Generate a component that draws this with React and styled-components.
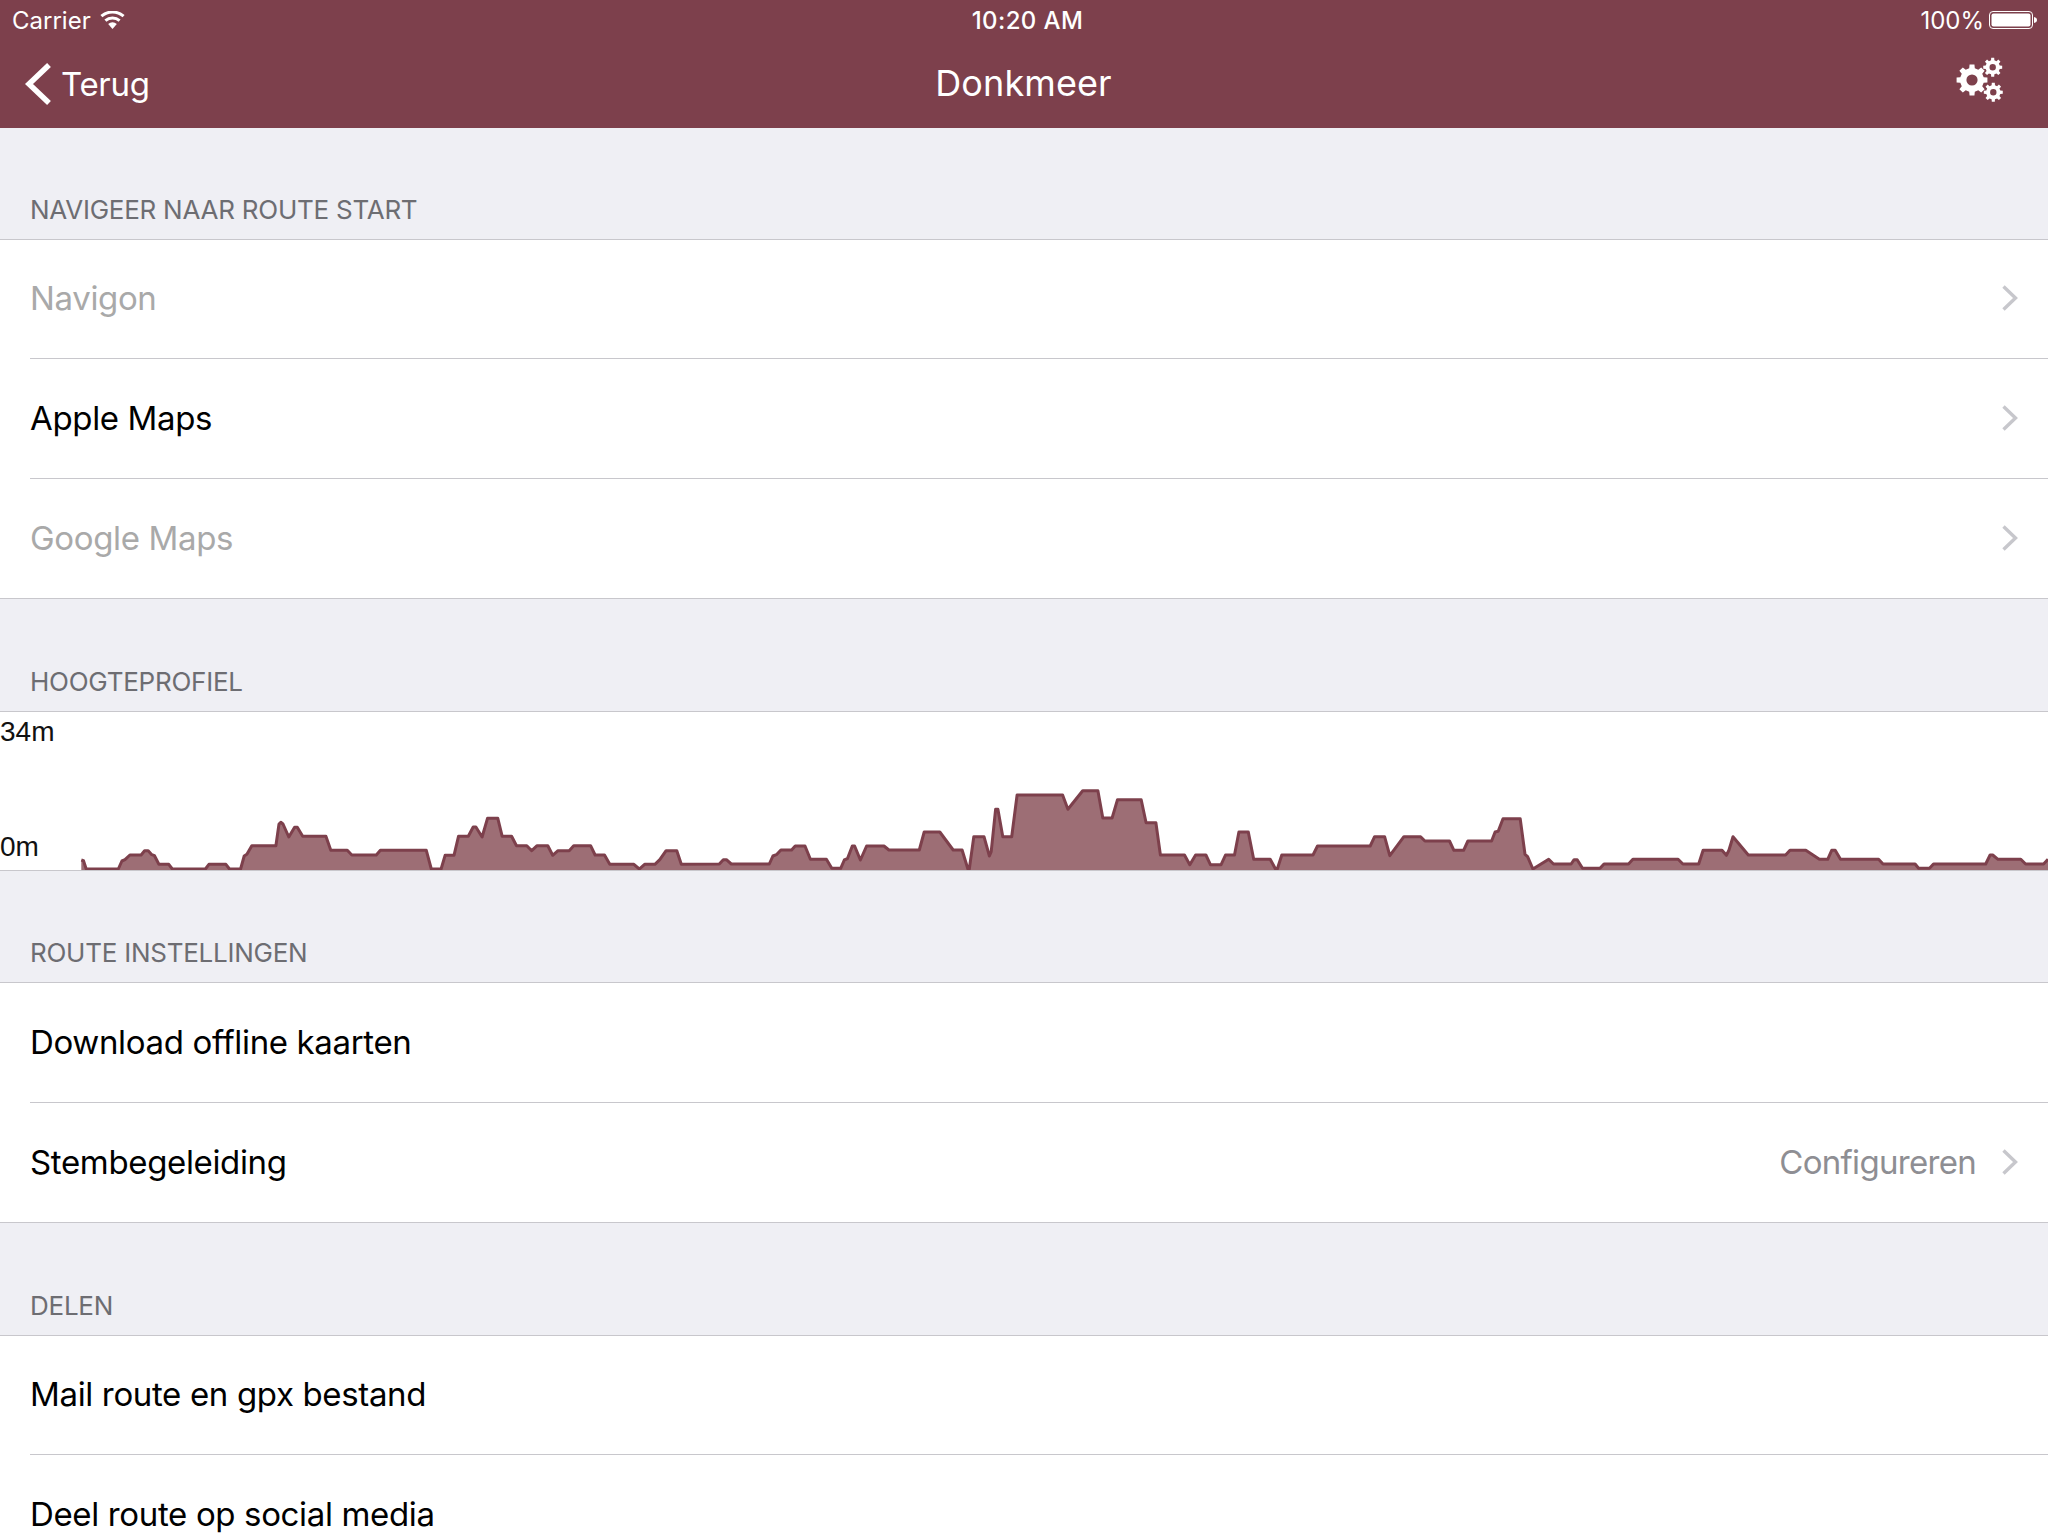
import styled, { createGlobalStyle } from 'styled-components';

const GlobalStyle = createGlobalStyle`
  html, body {
    margin: 0;
    padding: 0;
    height: 1536px;
    overflow: hidden;
    background: #efeff4;
    font-family: Inter, "Noto Sans", sans-serif;
  }
`;

const Page = styled.div`
  width: 2048px;
  height: 1536px;
  overflow: hidden;
  display: flex;
  flex-direction: column;
`;

const Header = styled.header`
  height: 128px;
  flex-shrink: 0;
  color: #fff;
  background: #7d404c;
  display: flex;
  flex-direction: column;
`;

const StatusBar = styled.div`
  height: 40px;
  padding: 0 10px 0 12px;
  font-size: 24px;
  display: grid;
  grid-template-columns: 1fr auto 1fr;
  align-items: center;
`;

const StatusLeft = styled.div`
  display: flex;
  align-items: center;
  gap: 9px;
`;

const StatusRight = styled.div`
  display: flex;
  align-items: center;
  justify-content: flex-end;
  gap: 5px;
`;

const Clock = styled.div`
  margin-left: 5px;
  font-weight: 500;
  letter-spacing: 0.4px;
`;

const NavBar = styled.div`
  flex: 1;
  padding: 0 25px 0 24px;
  display: grid;
  grid-template-columns: 1fr auto 1fr;
  align-items: center;
`;

const BackLink = styled.div`
  display: flex;
  align-items: center;
  gap: 9px;
  font-size: 33px;
  letter-spacing: -0.3px;
`;

const NavTitle = styled.div`
  padding-bottom: 2px;
  font-size: 36px;
  letter-spacing: 0.1px;
`;

const NavAction = styled.div`
  display: flex;
  justify-content: flex-end;
  padding: 0 13px 8px 0;
`;

const SectionTitle = styled.div`
  height: ${({ $tall }) => ($tall ? 112 : 111)}px;
  padding: 0 30px 13px;
  box-sizing: border-box;
  flex-shrink: 0;
  color: #6d6d72;
  font-size: 26px;
  letter-spacing: -0.25px;
  display: flex;
  align-items: flex-end;
  line-height: 32px;
`;

const Group = styled.div`
  flex-shrink: 0;
  background: #fff;
  border-top: 1px solid #c8c7cc;
  border-bottom: 1px solid #c8c7cc;
`;

const Row = styled.div`
  height: ${({ $short }) => ($short ? 119 : 120)}px;
  padding-left: 30px;
  box-sizing: border-box;
  display: flex;

  &:last-child {
    height: 119px;
  }
`;

const RowInner = styled.div`
  flex: 1;
  padding: 0 29px 2px 0;
  display: flex;
  align-items: center;
  justify-content: space-between;
  font-size: 33px;
  letter-spacing: -0.35px;
  color: ${({ $disabled }) => ($disabled ? '#a9a9a9' : '#000')};
  border-bottom: 1px solid #c8c7cc;

  ${Row}:last-child & {
    border-bottom: 0;
  }
`;

const RowEnd = styled.div`
  display: flex;
  align-items: center;
  gap: 25px;
`;

const Detail = styled.span`
  color: #8e8e93;
  letter-spacing: -0.7px;
`;

const ChartBox = styled.div`
  position: relative;
  height: 158px;
  display: flex;
  flex-direction: column;
  justify-content: space-between;
  padding: 5px 0 8px;
  box-sizing: border-box;
  color: #111;
  font-family: "Liberation Sans", Arial, sans-serif;
  font-size: 28px;
  line-height: 30px;
`;

const ChartSvg = styled.svg`
  position: absolute;
  left: 0;
  top: 0;
`;

const AxisLabel = styled.span`
  position: relative;
`;

// elevation samples as read off the screen, [x, y] in each strip's own units
const toPage = (points, x0, y0, xScale) =>
  points.map(([x, y]) => [x0 + x * xScale, y0 + y / 3]);

const STRIP_A = [[182,480],[187,482],[193,507],[265,507],[273,483],[280,479],[291,465],[316,465],[324,452],[332,452],[340,464],[346,467],[356,493],[378,493],[386,507],[460,507],[468,493],[506,493],[514,507],[539,507],[547,468],[553,463],[564,437],[618,437],[625,372],[629,367],[634,372],[647,411],[660,382],[666,382],[678,409],[730,409],[741,451],[778,451],[788,465],[843,465],[852,451],[955,451],[966,507],[988,507],[997,466],[1017,466],[1027,409],[1049,409],[1060,381],[1066,381],[1080,411],[1092,355],[1115,355],[1125,409],[1146,409],[1157,437],[1180,437],[1191,452],[1203,437],[1227,437],[1238,466],[1250,452],[1275,452],[1285,437],[1323,437],[1333,465],[1354,465],[1366,493],[1420,493],[1432,507],[1444,493],[1467,493],[1478,479],[1492,452],[1516,452],[1526,493]];

const STRIP_B = [[88,312],[97,299],[104,299],[115,312],[200,312],[208,288],[216,284],[226,270],[250,270],[258,258],[280,258],[292,298],[328,298],[340,325],[360,325],[368,300],[375,296],[386,258],[391,258],[404,300],[418,258],[457,258],[468,270],[536,270],[547,216],[582,216],[612,270],[632,270],[645,327],[648,327],[658,230],[681,230],[693,288],[697,275],[707,148],[712,148],[723,230],[743,230],[755,105],[857,105],[869,148],[902,92],[936,92],[947,174],[968,174],[980,119],[1033,119],[1044,188],[1066,188],[1076,285],[1130,285],[1142,314],[1155,285],[1178,285],[1188,314],[1212,314],[1222,285],[1242,285],[1252,216],[1273,216],[1285,298],[1322,298],[1334,327],[1338,327],[1348,285],[1418,285],[1428,258],[1546,258],[1556,230]];

const STRIP_C = [[56,230],[68,287],[100,230],[138,230],[148,243],[204,243],[214,271],[236,271],[246,243],[300,243],[308,216],[315,214],[326,176],[365,176],[376,283],[382,290],[394,327],[430,298],[441,312],[481,312],[488,299],[495,299],[507,325],[547,325],[556,312],[612,312],[622,298],[725,298],[736,312],[772,312],[782,271],[825,271],[835,286],[841,270],[850,230],[885,285],[970,285],[980,271],[1016,271],[1047,298],[1066,298],[1075,271],[1083,271],[1095,298],[1182,298],[1192,312],[1265,312],[1273,325],[1298,325],[1307,312],[1426,312],[1436,285],[1442,285],[1454,298],[1506,298],[1517,312],[1558,312],[1568,298]];

const PROFILE = [
  ...toPage(STRIP_A, 0, 700, 700 / 1568),
  ...toPage(STRIP_B, 680, 760, 700 / 1568),
  ...toPage(STRIP_C, 1360, 760, 688 / 1568),
];

function ElevationChart() {
  const line = PROFILE.map(([x, y]) => `${x.toFixed(1)},${y.toFixed(1)}`).join(' ');
  const startX = PROFILE[0][0].toFixed(1);
  return (
    <ChartBox>
      <ChartSvg width="2048" height="158" viewBox="0 712 2048 158">
        <polygon points={`${startX},870 ${line} 2048,870`} fill="#9d6e75" />
        <polyline points={line} fill="none" stroke="#7d404c" strokeWidth="3" strokeLinejoin="round" />
      </ChartSvg>
      <AxisLabel>34m</AxisLabel>
      <AxisLabel>0m</AxisLabel>
    </ChartBox>
  );
}

// one gear outline with its hole, 8 teeth with one pointing straight up
function gearPath(cx, cy, outer, root, hole) {
  const step = (Math.PI * 2) / 8;
  const at = (r, a) => `${(cx + r * Math.sin(a)).toFixed(2)} ${(cy - r * Math.cos(a)).toFixed(2)}`;
  let d = '';
  for (let i = 0; i < 8; i++) {
    const a = i * step;
    d += `${i === 0 ? 'M' : 'L'}${at(root, a - step * 0.3)} `;
    d += `L${at(outer, a - step * 0.2)} L${at(outer, a + step * 0.2)} L${at(root, a + step * 0.3)} `;
  }
  d += `Z M${cx - hole} ${cy} a${hole} ${hole} 0 1 0 ${hole * 2} 0 a${hole} ${hole} 0 1 0 ${-hole * 2} 0 Z`;
  return d;
}

const GearsIcon = () => (
  <svg width="60" height="60" viewBox="0 0 60 60">
    <path d={gearPath(22, 30, 15.6, 12, 5.6)} fill="#fff" fillRule="evenodd" />
    <path d={gearPath(42.7, 17.3, 9.6, 7.2, 3.2)} fill="#fff" fillRule="evenodd" />
    <path d={gearPath(43.3, 42.3, 9.6, 7.2, 3.2)} fill="#fff" fillRule="evenodd" />
  </svg>
);

const Chevron = () => (
  <svg width="18" height="28" viewBox="0 0 18 28">
    <path d="M2.5 2.5 L14.5 14 L2.5 25.5" fill="none" stroke="#c7c7cc" strokeWidth="3.4" />
  </svg>
);

const BackChevron = () => (
  <svg width="28" height="44" viewBox="0 0 28 44">
    <path d="M25 3 L5 22 L25 41" fill="none" stroke="#fff" strokeWidth="5.5" />
  </svg>
);

const WifiIcon = () => (
  <svg width="25" height="18" viewBox="0 0 25 18">
    <path d="M12.5 18 L8.2 13 A6.4 6.4 0 0 1 16.8 13 Z" fill="#fff" />
    <path d="M5.4 9.6 A10.8 10.8 0 0 1 19.6 9.6" fill="none" stroke="#fff" strokeWidth="3" />
    <path d="M1.4 5.2 A16.8 16.8 0 0 1 23.6 5.2" fill="none" stroke="#fff" strokeWidth="3" />
  </svg>
);

const BatteryIcon = () => (
  <svg width="49" height="20" viewBox="0 0 49 20">
    <rect x="0.5" y="1.5" width="43" height="17" rx="3.5" fill="none" stroke="#fff" strokeWidth="1" />
    <rect x="2.5" y="3.5" width="39" height="13" rx="2" fill="#fff" />
    <path d="M45 7 C47 7.4 48 8.5 48 10 C48 11.5 47 12.6 45 13 Z" fill="#fff" />
  </svg>
);

function ListRow({ label, detail, disabled, short, chevron = true }) {
  return (
    <Row $short={short}>
      <RowInner $disabled={disabled}>
        <span>{label}</span>
        <RowEnd>
          {detail && <Detail>{detail}</Detail>}
          {chevron && <Chevron />}
        </RowEnd>
      </RowInner>
    </Row>
  );
}

export default function App() {
  return (
    <Page>
      <GlobalStyle />
      <Header>
        <StatusBar>
          <StatusLeft>
            <span>Carrier</span>
            <WifiIcon />
          </StatusLeft>
          <Clock>10:20 AM</Clock>
          <StatusRight>
            <span>100%</span>
            <BatteryIcon />
          </StatusRight>
        </StatusBar>
        <NavBar>
          <BackLink>
            <BackChevron />
            <span>Terug</span>
          </BackLink>
          <NavTitle>Donkmeer</NavTitle>
          <NavAction>
            <GearsIcon />
          </NavAction>
        </NavBar>
      </Header>

      <SectionTitle>NAVIGEER NAAR ROUTE START</SectionTitle>
      <Group>
        <ListRow label="Navigon" disabled short />
        <ListRow label="Apple Maps" />
        <ListRow label="Google Maps" disabled />
      </Group>

      <SectionTitle $tall>HOOGTEPROFIEL</SectionTitle>
      <Group>
        <ElevationChart />
      </Group>

      <SectionTitle>ROUTE INSTELLINGEN</SectionTitle>
      <Group>
        <ListRow label="Download offline kaarten" chevron={false} />
        <ListRow label="Stembegeleiding" detail="Configureren" />
      </Group>

      <SectionTitle $tall>DELEN</SectionTitle>
      <Group>
        <ListRow label="Mail route en gpx bestand" chevron={false} short />
        <ListRow label="Deel route op social media" chevron={false} />
      </Group>
    </Page>
  );
}
